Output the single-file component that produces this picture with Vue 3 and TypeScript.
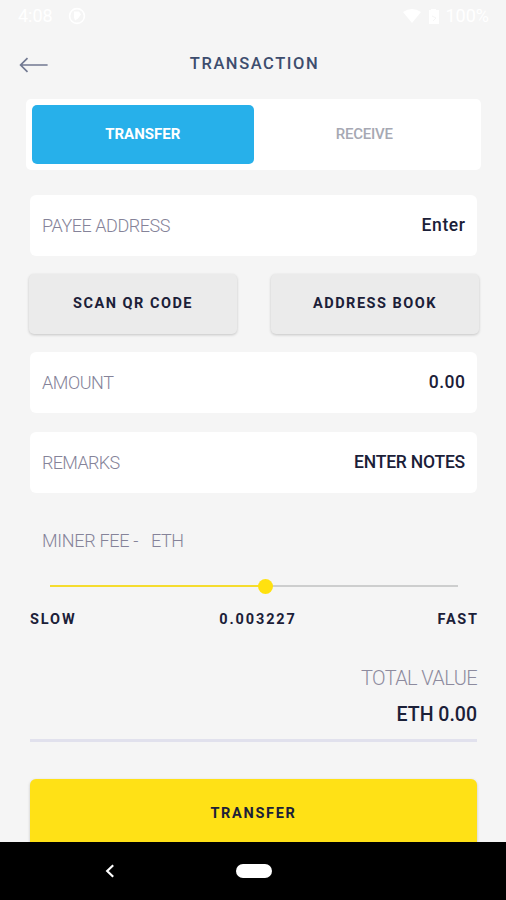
<script setup lang="ts">
import { ref } from 'vue'

const activeTab = ref<'transfer' | 'receive'>('transfer')
const fee = ref(0.003227)
const feePosition = ref(52.8)
</script>

<template>
  <div class="screen">
    <div class="status">
      <div class="status-group">
        <span class="clock">4:08</span>
        <svg class="status-ring" viewBox="0 0 18 18">
          <circle cx="9" cy="9" r="7.4" fill="none" stroke="#fff" stroke-width="1.6" />
          <path d="M6 4.5h5l2 3-3 4-3 2-1-3z" fill="#fff" />
        </svg>
      </div>
      <div class="status-group right">
        <svg class="wifi" viewBox="0 0 18 14"><path d="M0 3Q9-3 18 3L9 14z" fill="#fff" /></svg>
        <svg class="battery" viewBox="0 0 12 16"><path d="M3 1h5v1h3v14H1V2h2z" fill="#fff" /><path d="M4 8l4 2-3 3" fill="none" stroke="#f5f5f5" /></svg>
        <span class="percent">100%</span>
      </div>
    </div>

    <header class="header">
      <svg class="back" viewBox="0 0 30 16">
        <path d="M8.5 1.2L1.6 8l6.9 6.8M1.6 8h27" fill="none" stroke="#717891" stroke-width="1.7" />
      </svg>
      <h1 class="title">TRANSACTION</h1>
    </header>

    <div class="tabs">
      <button class="tab" :class="{ active: activeTab === 'transfer' }" @click="activeTab = 'transfer'">TRANSFER</button>
      <button class="tab" :class="{ active: activeTab === 'receive' }" @click="activeTab = 'receive'">RECEIVE</button>
    </div>

    <main class="form">
      <div class="field">
        <span class="label payee">PAYEE ADDRESS</span>
        <span class="value enter">Enter</span>
      </div>
      <div class="actions">
        <button class="action">SCAN QR CODE</button>
        <button class="action">ADDRESS BOOK</button>
      </div>
      <div class="field">
        <span class="label amount">AMOUNT</span>
        <span class="value zero">0.00</span>
      </div>
      <div class="field remarks-field">
        <span class="label remarks">REMARKS</span>
        <span class="value notes">ENTER NOTES</span>
      </div>

      <div class="miner">
        <span class="label fee">MINER FEE -</span>
        <span class="label eth">ETH</span>
      </div>
      <div class="slider">
        <div class="fill" :style="{ width: feePosition + '%' }"></div>
        <div class="thumb" :style="{ left: feePosition + '%' }"></div>
      </div>
      <div class="scale">
        <span class="slow">SLOW</span>
        <span class="rate">{{ fee }}</span>
        <span class="fast">FAST</span>
      </div>

      <div class="total">
        <span class="total-label">TOTAL VALUE</span>
        <span class="total-value">ETH 0.00</span>
      </div>
      <button class="submit">TRANSFER</button>
    </main>

    <nav class="navbar">
      <svg class="nav-back" viewBox="0 0 10 14"><path d="M8.2 1.2L2.2 7l6 5.8" fill="none" stroke="#fff" stroke-width="2.2" /></svg>
      <div class="home"></div>
    </nav>
  </div>
</template>

<style>
body {
  background: #f5f5f5;
}
</style>

<style scoped>
.screen {
  height: 900px;
  display: flex;
  flex-direction: column;
  overflow: hidden;
  background: #f5f5f5;
  color: #1b2038;
  font-family: Roboto, "Liberation Sans", sans-serif;
  white-space: nowrap;
}
button {
  border: 0;
  margin: 0;
  padding: 0;
  font: inherit;
  color: inherit;
}
.status {
  height: 31px;
  flex: none;
  display: flex;
  justify-content: space-between;
  padding: 0 17px 0 18px;
  color: #fff;
  font-size: 18px;
}
.status-group {
  display: flex;
  align-items: center;
}
.status-ring {
  width: 18px;
  height: 18px;
  margin-left: 15px;
}
.wifi {
  width: 18px;
  height: 14px;
}
.battery {
  width: 12px;
  height: 16px;
  margin: 0 5px 0 7px;
}
.header {
  height: 68px;
  flex: none;
  display: grid;
  grid-template-columns: 48px 1fr 48px;
  align-items: center;
}
.back {
  width: 30px;
  height: 16px;
  margin: 0 0 0 19px;
}
.title {
  margin: 0 0 3px 3px;
  text-align: center;
  color: #3d4d6e;
  font-size: 16.5px;
  font-weight: 500;
  letter-spacing: 1.55px;
}
.tabs {
  height: 71px;
  flex: none;
  box-sizing: border-box;
  margin: 0 25px 0 26px;
  padding: 6px;
  display: flex;
  border-radius: 5px;
  background: #fff;
}
.tab {
  flex: 1;
  padding-bottom: 2px;
  border-radius: 5px;
  background: #fff;
  color: #a6a8b3;
  font-size: 15px;
  font-weight: 500;
  letter-spacing: -0.2px;
}
.tab.active {
  background: #27b0ea;
  color: #fff;
  font-weight: 700;
  letter-spacing: 0;
}
.form {
  flex: 1;
  min-height: 0;
  overflow: hidden;
  padding: 25px 29px 0 30px;
  display: flex;
  flex-direction: column;
}
.field {
  height: 61px;
  flex: none;
  box-sizing: border-box;
  padding: 0 12px 1px;
  display: flex;
  align-items: center;
  justify-content: space-between;
  border-radius: 6px;
  background: #fff;
}
.remarks-field {
  margin-top: 19px;
}
.label {
  color: #858399;
  font-size: 18px;
  font-weight: 300;
  letter-spacing: -0.45px;
}
.remarks {
  letter-spacing: -0.65px;
}
.fee {
  letter-spacing: -0.3px;
}
.value {
  font-size: 17.5px;
  font-weight: 500;
}
.enter {
  margin-right: -0.6px;
  letter-spacing: 0.6px;
}
.zero {
  margin-right: -0.5px;
  letter-spacing: 0.5px;
}
.notes {
  letter-spacing: -0.2px;
}
.actions {
  height: 60px;
  flex: none;
  margin: 18px -2px 18px -1px;
  display: grid;
  grid-template-columns: 208px 208px;
  justify-content: space-between;
}
.action {
  border-radius: 5px;
  background: #ebebeb;
  box-shadow: 0 1px 3px rgba(0, 0, 0, 0.2);
  font-size: 14.5px;
  font-weight: 700;
  letter-spacing: 1.5px;
  padding-bottom: 1px;
}
.miner {
  height: 24px;
  flex: none;
  margin: 35px 12px 0;
  display: flex;
  align-items: center;
  gap: 13px;
}
.slider {
  position: relative;
  height: 2px;
  flex: none;
  margin: 33px 19px 0 20px;
  background: #cdcece;
}
.fill {
  height: 2px;
  background: #f5dc2e;
}
.thumb {
  position: absolute;
  top: -6.5px;
  width: 15px;
  height: 15px;
  margin-left: -7.5px;
  border-radius: 50%;
  background: #ffe10f;
}
.scale {
  height: 20px;
  flex: none;
  margin-top: 22px;
  display: grid;
  grid-template-columns: 1fr auto 1fr;
  align-items: center;
  font-size: 14.5px;
  font-weight: 700;
  letter-spacing: 1.9px;
}
.rate {
  margin-left: 9px;
}
.fast {
  margin-right: -1.7px;
  text-align: right;
  letter-spacing: 1.7px;
}
.total {
  height: 113px;
  flex: none;
  box-sizing: border-box;
  padding-top: 37px;
  display: flex;
  flex-direction: column;
  align-items: flex-end;
  border-bottom: 3px solid #e1e1ed;
}
.total-label {
  height: 24px;
  line-height: 24px;
  color: #8d8b9e;
  font-size: 20px;
  font-weight: 300;
  letter-spacing: -0.6px;
}
.total-value {
  height: 24px;
  margin-top: 13px;
  line-height: 24px;
  font-size: 19.5px;
  font-weight: 500;
}
.submit {
  height: 68px;
  flex: none;
  margin-top: 37px;
  border-radius: 6px 6px 0 0;
  background: #ffe116;
  box-shadow: 0 1px 3px rgba(0, 0, 0, 0.2);
  font-size: 14.5px;
  font-weight: 700;
  letter-spacing: 1.7px;
}
.navbar {
  height: 58px;
  flex: none;
  display: grid;
  grid-template-columns: 105px 131px 36px;
  align-items: center;
  background: #000;
}
.nav-back {
  grid-column: 2;
  width: 10px;
  height: 14px;
}
.home {
  height: 14px;
  border-radius: 7px;
  background: #fff;
}
</style>
